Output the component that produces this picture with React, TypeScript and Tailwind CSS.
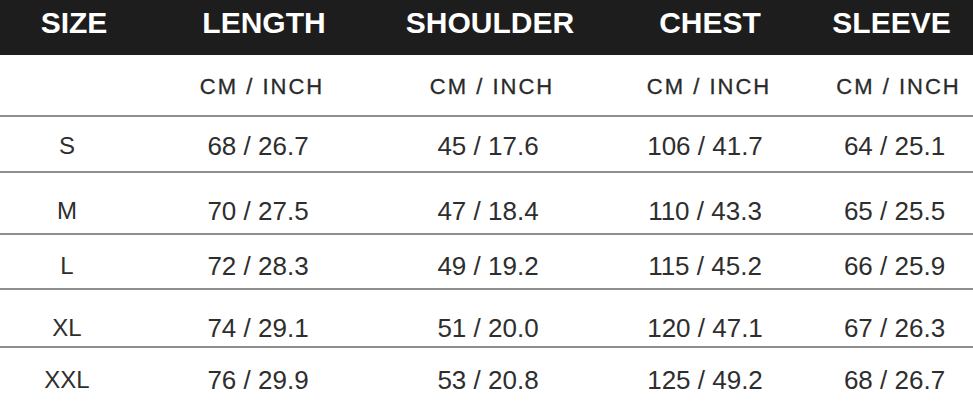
const COLS = "grid grid-cols-[134px_248px_212px_222px_157px]";

const HEADINGS: { label: string; shift: string }[] = [
  { label: "SIZE", shift: "pl-[14px]" },
  { label: "LENGTH", shift: "pl-[12px]" },
  { label: "SHOULDER", shift: "pl-[4px]" },
  { label: "CHEST", shift: "pl-[10px]" },
  { label: "SLEEVE", shift: "pr-[6px]" },
];

// heights/padding follow the source image, rows are not quite even
const ROWS: { size: string; values: string[]; row: string }[] = [
  { size: "S", values: ["68 / 26.7", "45 / 17.6", "106 / 41.7", "64 / 25.1"], row: "h-[56px] pt-[4px]" },
  { size: "M", values: ["70 / 27.5", "47 / 18.4", "110 / 43.3", "65 / 25.5"], row: "h-[62px] pt-[16px]" },
  { size: "L", values: ["72 / 28.3", "49 / 19.2", "115 / 45.2", "66 / 25.9"], row: "h-[55px] pt-[9px]" },
  { size: "XL", values: ["74 / 29.1", "51 / 20.0", "120 / 47.1", "67 / 26.3"], row: "h-[58px] pt-[20px]" },
  { size: "XXL", values: ["76 / 29.9", "53 / 20.8", "125 / 49.2", "68 / 26.7"], row: "h-[56px] pt-[10px] border-b-0" },
];

export default function App() {
  return (
    <div className="h-[402px] w-[973px] overflow-hidden bg-white font-['Liberation_Sans',Arial,sans-serif]">
      <div className={`${COLS} h-[55px] items-center bg-[#1d1d1d] pb-[9px]`}>
        {HEADINGS.map((h) => (
          <div
            key={h.label}
            className={`text-center text-[30px] font-bold leading-none text-white ${h.shift}`}
          >
            {h.label}
          </div>
        ))}
      </div>

      <div className={`${COLS} h-[62px] items-center border-b-2 border-[#8e8e8e] pt-[4px]`}>
        <div />
        {HEADINGS.slice(1).map((h) => (
          <div
            key={h.label}
            className="pl-[8px] text-center text-[22px] leading-none tracking-[2px] text-[#2a2a2a] [-webkit-text-stroke:0.3px_#2a2a2a]"
          >
            CM / INCH
          </div>
        ))}
      </div>

      {ROWS.map((r) => (
        <div
          key={r.size}
          className={`${COLS} items-center border-b-2 border-[#8e8e8e] ${r.row}`}
        >
          <div className="text-center text-[24px] leading-none text-[#2e2e2e]">{r.size}</div>
          {r.values.map((v, i) => (
            <div key={i} className="text-center text-[26px] leading-none text-[#2e2e2e]">
              {v}
            </div>
          ))}
        </div>
      ))}
    </div>
  );
}
